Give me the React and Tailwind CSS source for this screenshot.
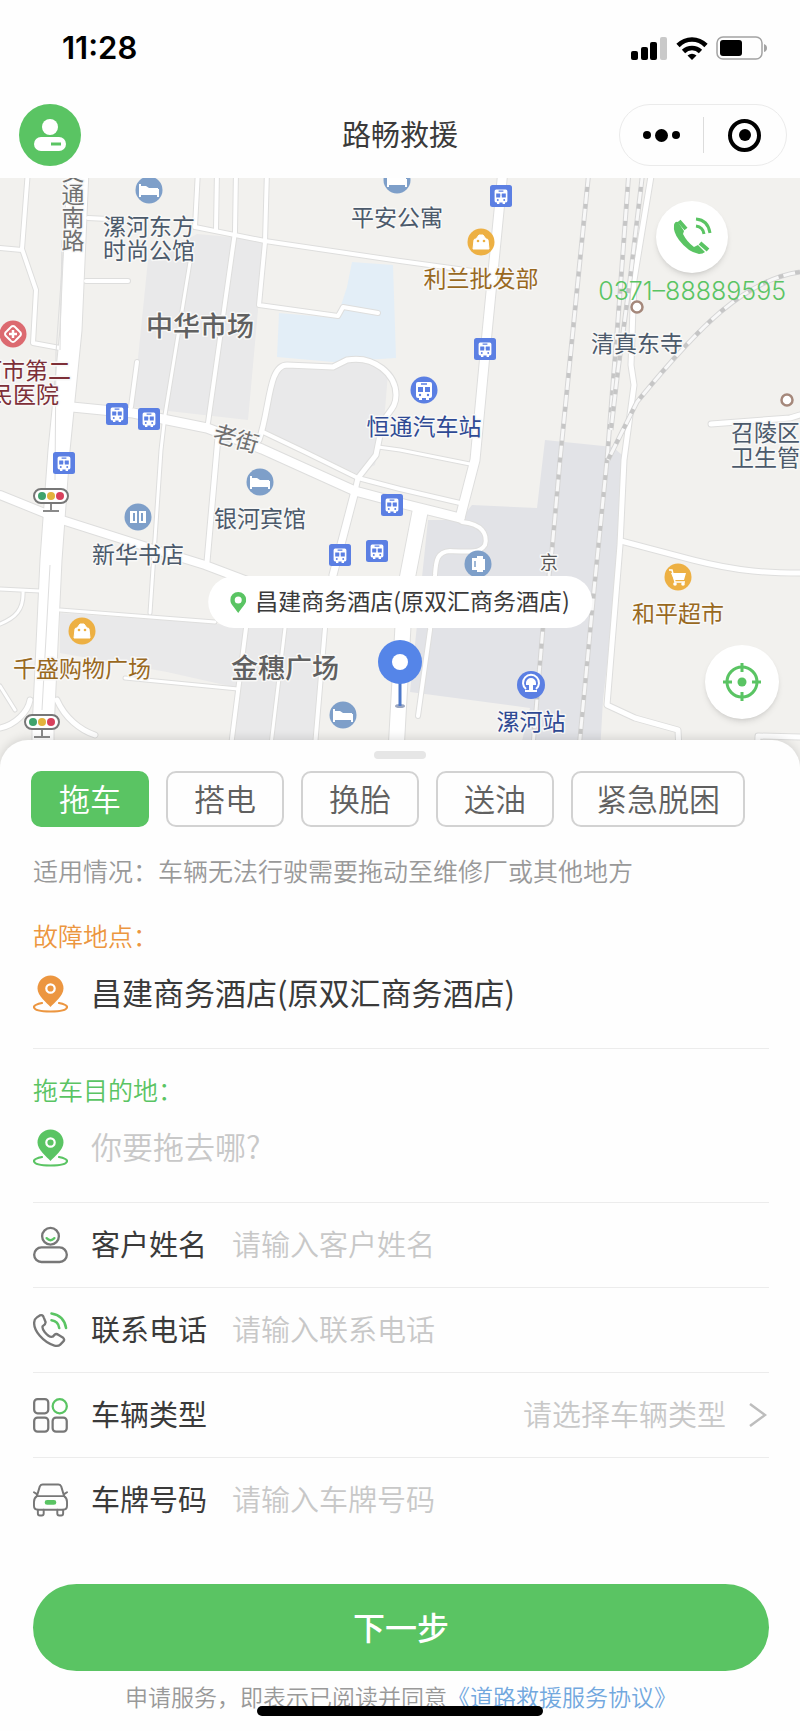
import React, { useState } from 'react';
import clsx from 'clsx';

const services = ['拖车', '搭电', '换胎', '送油', '紧急脱困'];

const areas = [
    { fill: '#e9e9ea', d: 'M148 260L197 234L263 240L258 310L248 420L133 407Z' },
    { fill: '#e9e9ea', d: 'M277 367L333 368L347 360L370 362L388 373L385 410L375 465L357 474L262 430Z' },
    { fill: '#e3eef7', d: 'M352 262L393 265L396 358L333 362L277 357L279 313L337 318L347 287Z' },
    { fill: '#e9e9ea', d: 'M60 613L233 625L323 628L313 770L230 770L238 688L167 672L60 653Z' },
    { fill: '#e2e3e7', d: 'M545 440L613 447L622 455L620 550L603 700L599 770L515 770L530 708L410 692L428 520L460 520L472 505L537 508Z' },
];

const roads = [
    { w: 3, d: 'M190 262L165 415L161 450L150 613' },
    { w: 3, d: 'M60 610L215 622' },
    { w: 3, d: 'M285 628L268 770' },
    { w: 3, d: 'M125 678L238 689' },
    { w: 3, d: 'M0 589L40 591M23 591C24 610 15 618 0 624M0 686L15 710' },
    { w: 3, d: 'M378 447L400 450L470 464' },
    { w: 4, d: 'M28 170L22 249L36 290L33 343L60 348M0 248L22 250' },
    { w: 4, d: 'M88 218L108 219M86 281L128 281M137 362L131 407' },
    { w: 4, d: 'M198 170L195 227M217 170L216 230M236 170L235 232L208 423' },
    { w: 4, d: 'M267 170L265 242L259 305L338 316L343 307L378 313' },
    { w: 4, d: 'M195 227L265 241L400 261L480 272' },
    { w: 4, d: 'M263 432L305 452L358 478L400 489L460 503' },
    { w: 5, d: 'M259 440C270 410 268 365 287 365L333 367L347 360C375 355 396 375 396 395C396 410 386 412 382 425L376 455L358 478L355 491' },
    { w: 5, d: 'M218 437L207 562' },
    { w: 4, d: 'M325 628L313 770M246 628L228 770' },
    { w: 5, d: 'M0 728C15 725 28 712 30 700M57 700C65 718 80 730 95 735' },
    { w: 4, d: 'M462 522C482 524 488 534 485 545C480 553 470 552 450 551C437 552 436 560 435 575L430 630L418 716' },
    { w: 5, d: 'M652 170L634 280L631 365L634 385L624 460L620 545L607 705L635 718L678 730L680 770' },
    { w: 5, d: 'M621 541L693 560C740 572 770 573 800 573' },
    { w: 5, d: 'M711 424L790 418L800 415M757 770L758 736L800 737' },
    { w: 8, d: 'M0 495L62 520L150 548L205 565L250 582' },
    { w: 7, d: 'M355 491L333 575' },
    { w: 9, d: 'M72 407L133 413L207 428L262 449L355 491L400 503L460 518' },
    { w: 9, d: 'M503 170L487 333L475 460L460 518' },
    { w: 15, d: 'M420 512L405 590L395 770' },
    { w: 21, d: 'M78 170L71 330L59 450L51 560L43 730L43 770' },
];

const rails = [
    'M589 170L560 460L552 550L543 627L531 770',
    'M629 170L618 320L607 460L594 590L577 770',
    'M643 170L630 280L617 378L611 430',
    'M800 272C745 280 700 325 637 402L608 460',
];

const labels = [
    { text: '漯河东方', x: 149, y: 235, fill: '#4c5a6b' },
    { text: '时尚公馆', x: 149, y: 259, fill: '#4c5a6b' },
    { text: '平安公寓', x: 397, y: 226, fill: '#4c5a6b' },
    { text: '利兰批发部', x: 481, y: 287, fill: '#99691f' },
    { text: '恒通汽车站', x: 424, y: 435, fill: '#2f4a94' },
    { text: '清真东寺', x: 637, y: 352, fill: '#4c5a6b' },
    { text: '召陵区', x: 731, y: 441, fill: '#4c5a6b', anchor: 'start' },
    { text: '卫生管', x: 731, y: 466, fill: '#4c5a6b', anchor: 'start' },
    { text: '银河宾馆', x: 260, y: 527, fill: '#4c5a6b' },
    { text: '新华书店', x: 138, y: 563, fill: '#4c5a6b' },
    { text: '千盛购物广场', x: 82, y: 677, fill: '#99691f' },
    { text: '和平超市', x: 678, y: 622, fill: '#99691f' },
    { text: '漯河站', x: 531, y: 730, fill: '#2f4a94' },
    { text: '漯河市第二', x: 71, y: 379, fill: '#7d2f38', anchor: 'end' },
    { text: '人民医院', x: 59, y: 403, fill: '#7d2f38', anchor: 'end' },
];

const busStops = [[501, 196], [485, 349], [117, 414], [149, 419], [64, 463], [392, 505], [340, 555], [377, 551]];
const hotels = [[149, 190], [397, 180], [260, 482], [343, 715]];
const shops = [[481, 242], [82, 631]];
const trafficLights = [[51, 496], [42, 722]];

function Bus({ color }) {
    return (
        <>
            <path d="M-6-8H6Q8-8 8-6V6Q8 8 6 8H5V10H2V8H-2V10H-5V8H-6Q-8 8-8 6V-6Q-8-8-6-8Z" fill="#fff" />
            <path d="M-3-6H3M-5-1H-1M1-1H5" stroke={color} strokeWidth="1.5" />
            <path d="M-6-3H-1V2H-6ZM1-3H6V2H1Z" fill={color} />
            <circle cx="-4" cy="5" r="1.2" fill={color} />
            <circle cx="4" cy="5" r="1.2" fill={color} />
        </>
    );
}

function CityMap() {
    return (
        <svg viewBox="0 178 800 592" preserveAspectRatio="xMidYMin slice" className="block h-full w-full" role="img" aria-label="地图">
            <rect x="0" y="170" width="800" height="600" fill="#f2f1ee" />
            {areas.map((a) => <path key={a.d} d={a.d} fill={a.fill} />)}
            <g fill="none" strokeLinecap="round" strokeLinejoin="round">
                {roads.map((r) => <path key={r.d} d={r.d} stroke="#dededd" strokeWidth={r.w + 2} />)}
                {roads.map((r) => <path key={r.d} d={r.d} stroke="#fff" strokeWidth={r.w} />)}
            </g>
            <path d="M64 240L56 352L55 480M50 565L42 710M62 240L60 350" fill="none" stroke="#dedede" />
            <g fill="none">
                {rails.map((d) => (
                    <g key={d}>
                        <path d={d} stroke="#d6d6d6" strokeWidth="5" />
                        <path d={d} stroke="#f8f8f8" strokeWidth="3" />
                        <path d={d} stroke="#c6c6c6" strokeWidth="4" strokeDasharray="5 12" />
                    </g>
                ))}
            </g>

            {busStops.map(([x, y]) => (
                <g key={`${x}-${y}`} transform={`translate(${x} ${y})`}>
                    <rect x="-11" y="-11" width="22" height="22" rx="2.5" fill="#5b7fe3" />
                    <g transform="scale(.8)"><Bus color="#5b7fe3" /></g>
                </g>
            ))}
            {hotels.map(([x, y]) => (
                <g key={`${x}-${y}`} transform={`translate(${x} ${y})`}>
                    <circle r="13.5" fill="#7e9fc9" />
                    <path d="M-9-6V7M-9 4H9M9 7V-1" stroke="#fff" strokeWidth="2" fill="none" />
                    <path d="M-8-4H-3L0-2H9V3H-8Z" fill="#fff" />
                </g>
            ))}
            {shops.map(([x, y]) => (
                <g key={`${x}-${y}`} transform={`translate(${x} ${y})`}>
                    <circle r="13.5" fill="#edb043" />
                    <path d="M-8 7L-7-2Q-7-3-5-3L-2-7H2L5-3Q7-3 7-2L8 7Z" fill="#fff" stroke="#fff" strokeLinejoin="round" />
                    <circle cx="-3" cy="-1" r="1.3" fill="#edb043" />
                    <circle cx="3" cy="-1" r="1.3" fill="#edb043" />
                </g>
            ))}
            {trafficLights.map(([x, y]) => (
                <g key={`${x}-${y}`} transform={`translate(${x} ${y})`}>
                    <path d="M0 7V15M-8 15H8" stroke="#8a8a8a" strokeWidth="2" />
                    <rect x="-17" y="-7" width="34" height="14" rx="7" fill="#fff" stroke="#777" strokeWidth="2" />
                    <circle cx="-9" r="4" fill="#3fa36c" />
                    <circle r="4" fill="#e3b33c" />
                    <circle cx="9" r="4" fill="#d8405c" />
                </g>
            ))}
            <g transform="translate(424 390)">
                <circle r="13.5" fill="#5b7fe3" />
                <Bus color="#5b7fe3" />
            </g>
            {/* railway station */}
            <g transform="translate(531 685)">
                <circle r="14" fill="#5b7fe3" />
                <path d="M-5 4A8 8 0 1 1 5 4" fill="none" stroke="#fff" strokeWidth="2" />
                <path d="M-5-2A5 5 0 0 1 5-2V0H2V5H6V7H-6V5H-2V0H-5Z" fill="#fff" />
            </g>
            <g transform="translate(138 517)">
                <circle r="13.5" fill="#7e9fc9" />
                <path d="M-8-6H-1V6H-8ZM1-6H8V6H1Z" fill="#fff" />
                <path d="M-4-4V4M4-4V4" stroke="#7e9fc9" strokeWidth="2" />
            </g>
            <g transform="translate(478 564)">
                <circle r="13.5" fill="#7e9fc9" />
                <path d="M-6-6H0V6H-6ZM-1-8H5V-5H7V6H5V8H-1Z" fill="#fff" />
                <path d="M-3-3V3" stroke="#7e9fc9" strokeWidth="1.5" />
            </g>
            <g transform="translate(678 577)">
                <circle r="13.5" fill="#edb043" />
                <path d="M-7-4H8L6 3H-4Z" fill="#fff" />
                <path d="M-9-7H-6L-3 5H7" fill="none" stroke="#fff" strokeWidth="1.5" />
                <circle cx="-3" cy="7" r="1.8" fill="#fff" />
                <circle cx="5" cy="7" r="1.8" fill="#fff" />
            </g>
            {/* hospital */}
            <g transform="translate(13 334)">
                <circle r="13.5" fill="#dc6a70" />
                <path d="M-3-6Q0-10 3-6L6-3Q10 0 6 3L3 6Q0 10-3 6L-6 3Q-10 0-6-3Z" fill="none" stroke="#fff" strokeWidth="2" />
                <path d="M-4 0H4M0-4V4" stroke="#fff" strokeWidth="2.5" />
            </g>
            <circle cx="637" cy="307" r="5.5" fill="#fff" stroke="#a5887b" strokeWidth="2.5" />
            <circle cx="787" cy="400" r="5.5" fill="#fff" stroke="#a5887b" strokeWidth="2.5" />

            <g fontSize="23" stroke="#f8f8f7" strokeWidth="3" strokeLinejoin="round" style={{ paintOrder: 'stroke' }}>
                {labels.map((l) => (
                    <text key={l.text} x={l.x} y={l.y} fill={l.fill} textAnchor={l.anchor || 'middle'}>{l.text}</text>
                ))}
                <text x="73" y="160" fill="#707070" style={{ writingMode: 'vertical-rl' }}>交通南路</text>
                <text x="549" y="569" fontSize="18" fill="#555" textAnchor="middle">京</text>
                <text transform="translate(236 439) rotate(16)" y="8" fill="#707070" textAnchor="middle">老街</text>
                <text x="200" y="336" fontSize="27" fontWeight="500" fill="#606060" textAnchor="middle">中华市场</text>
                <text x="285" y="678" fontSize="27" fontWeight="500" fill="#606060" textAnchor="middle">金穗广场</text>
            </g>

            <ellipse cx="400" cy="706" rx="5" ry="2" fill="#9aa6c0" />
            <path d="M400 680V706" stroke="#4d78c9" strokeWidth="3" />
            <circle cx="400" cy="662" r="22" fill="#5585e8" />
            <circle cx="400" cy="662" r="8" fill="#fff" />
        </svg>
    );
}

function PlacePin() {
    return (
        <svg viewBox="0 0 35 38" className="h-[38px] w-[35px] shrink-0" aria-hidden="true">
            <path d="M9 28C4 29 1 30 1 32C1 35 8 36.5 17.5 36.5S34 35 34 32C34 30 31 29 26 28" fill="none" stroke="currentColor" strokeWidth="2.2" strokeLinecap="round" />
            <path d="M17.5 32C14 28 4.500 21 4.500 13.500A13 13 0 0 1 30.500 13.500C30.500 21 21 28 17.500 32Z" fill="currentColor" />
            <circle cx="17.5" cy="13.5" r="4.2" fill="none" stroke="#fff" strokeWidth="2.2" />
        </svg>
    );
}

function PersonIcon() {
    return (
        <svg viewBox="0 0 36 38" className="h-[38px] w-[35px] shrink-0" fill="none" stroke="#777" strokeWidth="2.4" aria-hidden="true">
            <circle cx="18" cy="10" r="8.6" />
            <path d="M14 12Q18 16 22 12" stroke="#5ac463" strokeLinecap="round" />
            <rect x="1.2" y="21.5" width="33.6" height="15" rx="7.5" />
        </svg>
    );
}

function CallIcon() {
    return (
        <svg viewBox="0 0 36 38" className="h-[38px] w-[35px] shrink-0" fill="none" stroke="#777" strokeWidth="2.4" strokeLinecap="round" strokeLinejoin="round" aria-hidden="true">
            <path d="M4 6L7 4Q10 3 11 6L13 11Q13 13 10 15Q9 17 12 21Q16 26 19 26Q21 26 22 24Q24 22 26 24L31 27Q33 29 31 31L28 34Q26 36 22 35Q14 33 7 25Q1 18 1.200 12Q1 8 4 6Z" />
            <path d="M19 2Q32 4 34 17M19 9Q26 10 27 17" stroke="#5ac463" strokeWidth="2.6" />
        </svg>
    );
}

function TypeIcon() {
    return (
        <svg viewBox="0 0 36 36" className="h-[35px] w-[35px] shrink-0" fill="none" stroke="#777" strokeWidth="2.3" aria-hidden="true">
            <rect x="1.2" y="1.2" width="14.5" height="14.5" rx="3.5" />
            <circle cx="27.5" cy="8.5" r="7.3" stroke="#5ac463" />
            <rect x="1.2" y="20.2" width="14.5" height="14.5" rx="3.5" />
            <rect x="20.2" y="20.2" width="14.5" height="14.5" rx="3.5" />
        </svg>
    );
}

function CarIcon() {
    return (
        <svg viewBox="0 0 36 34" className="h-[34px] w-[35px] shrink-0" fill="none" stroke="#777" strokeWidth="2" strokeLinejoin="round" strokeLinecap="round" aria-hidden="true">
            <path d="M4 13L7 3Q8 1 10 1H26Q28 1 29 3L32 13M1 9L4 11M35 9L32 11" />
            <path d="M4 13H32Q35 15 35 19V23Q35 27 31 27H5Q1 27 1 23V19Q1 15 4 13Z" />
            <path d="M5 27V31Q5 33 7 33H9Q11 33 11 31V27M25 27V31Q25 33 27 33H29Q31 33 31 31V27" />
            <rect x="13" y="18" width="10" height="3" rx="1.5" fill="#5ac463" stroke="#5ac463" />
        </svg>
    );
}

function TextRow({ id, icon, label, type = 'text' }) {
    return (
        <div className="flex h-[85px] items-center border-b border-[#ececec]">
            {icon}
            <label htmlFor={id} className="ml-[23px] shrink-0 pb-[2px] text-[29px]">{label}</label>
            <input id={id} type={type} placeholder={`请输入${label}`} className="ml-[25px] min-w-0 flex-1 bg-transparent pb-[2px] text-[29px] font-[350] outline-none placeholder:text-[#c8c8c8]" />
        </div>
    );
}

export default function App() {
    const [service, setService] = useState('拖车');

    return (
        <div className="relative bg-[#fefefe] font-['Noto_Sans_CJK_SC',sans-serif] text-[#3a3a3a]">
            {/* Status bar */}
            <div className="flex h-[96px] items-center justify-between pr-[32px] pl-[62px]">
                <span className="font-['Inter',sans-serif] text-[31px] font-semibold text-black">11:28</span>
                <div className="flex items-center gap-[8px]">
                    <svg viewBox="0 0 37 23" className="h-[23px] w-[37px]" aria-hidden="true">
                        <rect x="0" y="14" width="7" height="9" rx="2" />
                        <rect x="10" y="10" width="7" height="13" rx="2" />
                        <rect x="19" y="5" width="7" height="18" rx="2" />
                        <rect x="29" y="0" width="7" height="23" rx="2" fill="#c9c9c9" />
                    </svg>
                    <svg viewBox="0 0 32 23" className="h-[23px] w-[32px]" fill="none" stroke="#000" strokeWidth="4.6" aria-hidden="true">
                        <path d="M2 8.5Q8 2.500 16 2.500T30 8.500" />
                        <path d="M7.500 14.500Q11 11 16 11T24.500 14.500" />
                        <path d="M11.500 18.500Q16 15 20.500 18.500L16 23Z" fill="#000" stroke="none" />
                    </svg>
                    <svg viewBox="0 0 52 24" className="h-[24px] w-[52px]" aria-hidden="true">
                        <rect x="1" y="1" width="45" height="22" rx="6" fill="none" stroke="#a3a3a3" strokeWidth="1.5" />
                        <rect x="4" y="4" width="22" height="16" rx="3" />
                        <path d="M48 8Q51 9 51 12T48 16Z" fill="#a3a3a3" />
                    </svg>
                </div>
            </div>

            {/* Title bar */}
            <header className="grid h-[82px] grid-cols-[1fr_auto_1fr] items-center px-[13px] pb-[4px]">
                <button type="button" aria-label="个人中心" className="ml-[6px] size-[62px] rounded-full bg-[#5ac463]">
                    <svg viewBox="0 0 62 62" aria-hidden="true">
                        <circle cx="31" cy="23" r="8" fill="#fff" />
                        <rect x="15" y="33" width="32" height="14" rx="7" fill="#fff" />
                        <path d="M32 40H42" stroke="#5ac463" strokeWidth="3" />
                    </svg>
                </button>
                <h1 className="pb-[2px] text-[29px]">路畅救援</h1>
                <div className="flex h-[62px] w-[168px] items-center justify-self-end rounded-full border border-[#ebebeb]">
                    <button type="button" aria-label="更多" className="flex flex-1 items-center justify-center gap-[4px]">
                        <span className="size-[8px] rounded-full bg-black"></span>
                        <span className="size-[13px] rounded-full bg-black"></span>
                        <span className="size-[8px] rounded-full bg-black"></span>
                    </button>
                    <span className="h-[36px] w-px bg-[#dcdcdc]"></span>
                    <button type="button" aria-label="关闭" className="flex flex-1 items-center justify-center">
                        <span className="flex size-[33px] items-center justify-center rounded-full border-4 border-black">
                            <span className="size-[12px] rounded-full bg-black"></span>
                        </span>
                    </button>
                </div>
            </header>

            {/* Map */}
            <section className="relative h-[592px] overflow-hidden">
                <CityMap />
                <div className="absolute top-[398px] left-1/2 flex h-[52px] -translate-x-1/2 items-center gap-[9px] rounded-full bg-white px-[22px] whitespace-nowrap">
                    <svg viewBox="0 0 16 21" className="h-[21px] w-[16px]" aria-hidden="true">
                        <path fillRule="evenodd" d="M8 21C4 15 0 12 0 8A8 8 0 0 1 16 8C16 12 12 15 8 21ZM8 4.500A3.500 3.500 0 1 0 8 11.500A3.500 3.500 0 1 0 8 4.500Z" fill="#5ac463" />
                    </svg>
                    <span className="pb-[3px] text-[23px]">昌建商务酒店(原双汇商务酒店)</span>
                </div>
                <a href="tel:0371-88889595" className="absolute top-[23px] right-[14px] flex flex-col items-center text-[#5ac463]">
                    <span className="flex size-[72px] items-center justify-center rounded-full bg-white shadow-md">
                        <svg viewBox="0 0 40 40" className="size-[40px]" fill="none" stroke="currentColor" aria-hidden="true">
                            <path d="M2 8Q1 15 7 23Q16 35 27 37Q31 37 33 35L26 28L22 30Q15 25 11 17L12 14L6 5Q3 4 2 8Z" fill="currentColor" stroke="none" />
                            <path d="M7 4L14 12M28 26L36 33" strokeWidth="4" />
                            <path d="M24 2Q36 3 38 16M24 9Q31 10 32 17" strokeWidth="3" />
                        </svg>
                    </span>
                    <span className="mt-[2px] font-['Inter',sans-serif] text-[25px] leading-[32px] font-[350]">0371–88889595</span>
                </a>
                <button type="button" aria-label="定位" className="absolute top-[467px] right-[21px] flex size-[74px] items-center justify-center rounded-full bg-white shadow-md">
                    <svg viewBox="0 0 38 38" className="size-[38px]" fill="none" stroke="#5ac463" strokeWidth="3" aria-hidden="true">
                        <circle cx="19" cy="19" r="15" />
                        <circle cx="19" cy="19" r="4.5" fill="#5ac463" stroke="none" />
                        <path d="M19 0V9M19 29V38M0 19H9M29 19H38" />
                    </svg>
                </button>
            </section>

            {/* Order sheet */}
            <main className="relative -mt-[30px] rounded-t-[28px] bg-[#fefefe] px-[31px] pt-[11px] pb-[17px] shadow-[0_-2px_10px_rgba(0,0,0,0.12)]">
                <div className="mx-auto h-[8px] w-[52px] rounded-full bg-[#e6e6e6]"></div>
                <div className="mt-[12px] flex gap-[17px]">
                    {services.map((s) => (
                        <button
                            key={s}
                            type="button"
                            onClick={() => setService(s)}
                            className={clsx(
                                'h-[56px] min-w-[118px] rounded-[10px] border-2 px-[23px] pb-[4px] text-[31px] leading-none font-[350]',
                                s === service ? 'border-[#5ac463] bg-[#5ac463] text-white' : 'border-[#d2d2d2] text-[#606060]'
                            )}
                        >
                            {s}
                        </button>
                    ))}
                </div>

                <div className="pl-[2px]">
                    <p className="mt-[27px] mb-[9px] text-[25px] leading-[32px] font-[350] text-[#999]">适用情况：车辆无法行驶需要拖动至维修厂或其他地方</p>

                    <div className="h-[154px] border-b border-[#ececec] pt-[24px]">
                        <label htmlFor="from" className="block text-[25px] leading-[32px] font-[350] text-[#ec9640]">故障地点：</label>
                        <div className="mt-[18px] flex h-[50px] items-center text-[#ec9640]">
                            <PlacePin />
                            <input id="from" defaultValue="昌建商务酒店(原双汇商务酒店)" className="ml-[23px] min-w-0 flex-1 bg-transparent pb-[3px] text-[31px] text-[#3a3a3a] outline-none" />
                        </div>
                    </div>

                    <div className="h-[154px] border-b border-[#ececec] pt-[24px]">
                        <label htmlFor="to" className="block text-[25px] leading-[32px] font-[350] text-[#5ac463]">拖车目的地：</label>
                        <div className="mt-[18px] flex h-[50px] items-center text-[#5ac463]">
                            <PlacePin />
                            <input id="to" placeholder="你要拖去哪?" className="ml-[23px] min-w-0 flex-1 bg-transparent pb-[3px] text-[31px] font-[350] text-[#3a3a3a] outline-none placeholder:text-[#c8c8c8]" />
                        </div>
                    </div>

                    <TextRow id="name" icon={<PersonIcon />} label="客户姓名" />
                    <TextRow id="phone" icon={<CallIcon />} label="联系电话" type="tel" />
                    <div className="flex h-[85px] items-center border-b border-[#ececec]">
                        <TypeIcon />
                        <label htmlFor="type" className="ml-[23px] shrink-0 pb-[2px] text-[29px]">车辆类型</label>
                        <select id="type" className="ml-auto appearance-none bg-transparent pb-[2px] text-[29px] font-[350] text-[#c8c8c8] outline-none">
                            <option>请选择车辆类型</option>
                        </select>
                        <svg viewBox="0 0 18 24" className="mr-[2px] ml-[22px] h-[24px] w-[18px]" fill="none" stroke="#bdbdbd" strokeWidth="2.5" aria-hidden="true">
                            <path d="M1 1L16 12L1 23" />
                        </svg>
                    </div>
                    <div className="[&>div]:border-transparent">
                        <TextRow id="plate" icon={<CarIcon />} label="车牌号码" />
                    </div>

                    <button type="button" className="mt-[41px] h-[87px] w-full rounded-full bg-[#5ac463] pb-[4px] text-[32px] font-medium text-white">下一步</button>
                    <p className="mt-[9px] mb-[2px] text-center text-[23px] leading-[32px] font-[350] text-[#999]">
                        申请服务，即表示已阅读并同意<a href="#agreement" className="text-[#72a8de]">《道路救援服务协议》</a>
                    </p>
                </div>
                <div className="absolute bottom-[15px] left-1/2 h-[10px] w-[286px] -translate-x-1/2 rounded-full bg-black"></div>
            </main>
        </div>
    );
}
